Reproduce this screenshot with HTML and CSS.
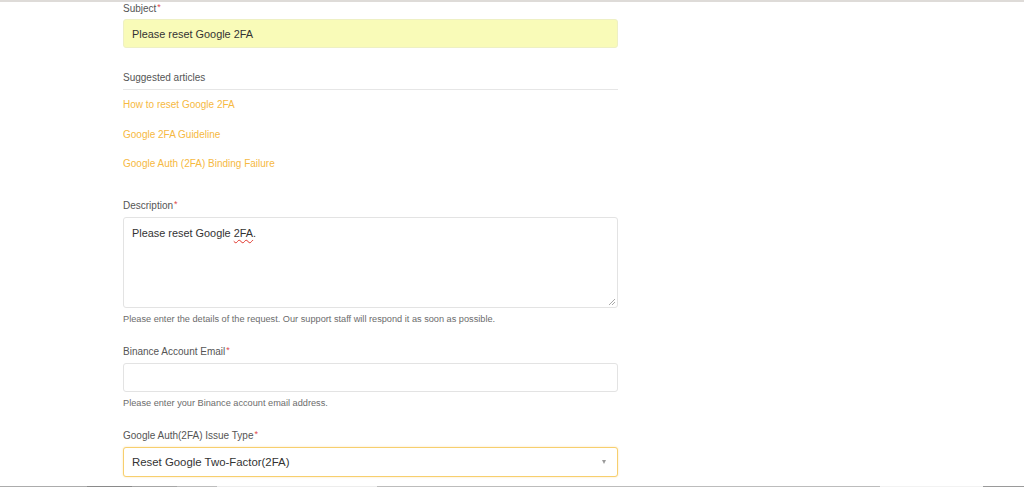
FILE: index.html
```html
<!DOCTYPE html>
<html lang="en">
<head>
    <meta charset="UTF-8">
    <meta name="viewport" content="width=device-width, initial-scale=1.0">
    <title>Submit a request</title>
    <link rel="stylesheet" href="styles.css">
</head>
<body>
    <form class="request-form">
        <div class="field field-subject">
            <label class="field-label">Subject<span class="req">*</span></label>
            <input class="field-input autofilled" type="text" value="Please reset Google 2FA">
        </div>

        <div class="suggested">
            <h4 class="suggested-title">Suggested articles</h4>
            <ul class="suggested-list">
                <li><a href="#">How to reset Google 2FA</a></li>
                <li><a href="#">Google 2FA Guideline</a></li>
                <li><a href="#">Google Auth (2FA) Binding Failure</a></li>
            </ul>
        </div>

        <div class="field">
            <label class="field-label">Description<span class="req">*</span></label>
            <div class="field-textarea" contenteditable="true">Please reset Google <span class="misspelled">2FA</span>.</div>
            <p class="field-hint">Please enter the details of the request. Our support staff will respond it as soon as possible.</p>
        </div>

        <div class="field">
            <label class="field-label">Binance Account Email<span class="req">*</span></label>
            <input class="field-input" type="email">
            <p class="field-hint">Please enter your Binance account email address.</p>
        </div>

        <div class="field">
            <label class="field-label">Google Auth(2FA) Issue Type<span class="req">*</span></label>
            <div class="select-wrap">
                <select class="field-select">
                    <option>Reset Google Two-Factor(2FA)</option>
                    <option>Google Auth (2FA) Binding Failure</option>
                </select>
            </div>
        </div>
    </form>
</body>
</html>
```

FILE: styles.css
```css
body {
    margin: 0;
    padding: 0;
    font-family: "Liberation Sans", Arial, sans-serif;
    color: #555;
    background: #fff;
    min-height: 100vh;
}
/* thin bars at the window edges */
body::before,
body::after {
    content: "";
    position: fixed;
    left: 0;
    right: 0;
    z-index: 5;
}
body::before {
    top: 0;
    height: 2px;
    background: #dedbd8;
}
body::after {
    bottom: 0;
    height: 1px;
    background: linear-gradient(to right,
        #acacac 0, #acacac 87px,
        #8a8a8a 87px, #8a8a8a 132px,
        #a6a6a6 132px, #a6a6a6 177px,
        #bdbdbd 177px, #bdbdbd 217px,
        #ededed 217px, #ededed 377px,
        #bcbcbc 377px, #bcbcbc 880px,
        #f2f2f2 880px, #f2f2f2 983px,
        #9a9a9a 983px);
}
.request-form {
    width: 495px;
    margin-left: 123px;
    font-size: 10px;
    line-height: 14px;
}
.field {
    margin-bottom: 19px;
}
.field-label {
    display: block;
    font-size: 10px;
    line-height: 14px;
    color: #555;
    margin-bottom: 4px;
}
.req {
    position: relative;
    top: -2px;
    color: #e0474c;
    font-size: 9px;
    line-height: 0;
    margin-left: 1px;
}
.field-input,
.field-select,
.field-textarea {
    display: block;
    width: 100%;
    box-sizing: border-box;
    border: 1px solid #e3e3e3;
    border-radius: 3px;
    font-family: "Liberation Sans", Arial, sans-serif;
    font-size: 10.9px;
    color: #333;
    background: #fff;
    outline: none;
}
.field-input {
    height: 29px;
    padding: 0 8px;
}
.autofilled {
    background: #f9fbb8;
    border-color: #eef0c4;
}
.field-subject {
    margin-bottom: 23px;
}
.field-subject .field-label {
    padding-top: 2px;
    margin-bottom: 3px;
}
.suggested {
    margin-bottom: 28px;
}
.suggested-title {
    margin: 0;
    font-size: 10px;
    font-weight: normal;
    line-height: 14px;
    color: #555;
    padding-bottom: 4px;
    border-bottom: 1px solid #e6e6e6;
}
.suggested-list {
    list-style: none;
    margin: 0;
    padding: 8px 0 0;
}
.suggested-list li {
    font-size: 10px;
    line-height: 14px;
    margin-bottom: 15.5px;
}
.suggested-list li:last-child {
    margin-bottom: 0;
}
.suggested-list a {
    color: #f6b942;
    text-decoration: none;
}
.field-textarea {
    position: relative;
    height: 91px;
    padding: 7px 8px;
    line-height: 16px;
}
/* resize grip in the corner */
.field-textarea::after {
    content: "";
    position: absolute;
    right: 2px;
    bottom: 2px;
    width: 6px;
    height: 6px;
    background: linear-gradient(135deg,
        transparent 0, transparent 45%,
        #a8a8a8 45%, #a8a8a8 55%,
        transparent 55%, transparent 72%,
        #a8a8a8 72%, #a8a8a8 82%,
        transparent 82%);
}
.misspelled {
    text-decoration: underline wavy #e0352b;
    text-decoration-thickness: 1px;
    text-underline-offset: 2px;
}
.field-hint {
    margin: 4px 0 0;
    font-size: 9.2px;
    line-height: 14px;
    color: #6c6c6c;
}
.select-wrap {
    position: relative;
}
.select-wrap::after {
    content: "";
    position: absolute;
    right: 12px;
    top: 13px;
    border-left: 2.5px solid transparent;
    border-right: 2.5px solid transparent;
    border-top: 4px solid #9a9a9a;
    pointer-events: none;
}
.field-select {
    height: 30px;
    padding: 0 8px;
    appearance: none;
    -webkit-appearance: none;
    border-color: #f7cf6e;
    box-shadow: 0 0 2px rgba(246, 190, 70, 0.45);
    font-size: 11.4px;
}
```
